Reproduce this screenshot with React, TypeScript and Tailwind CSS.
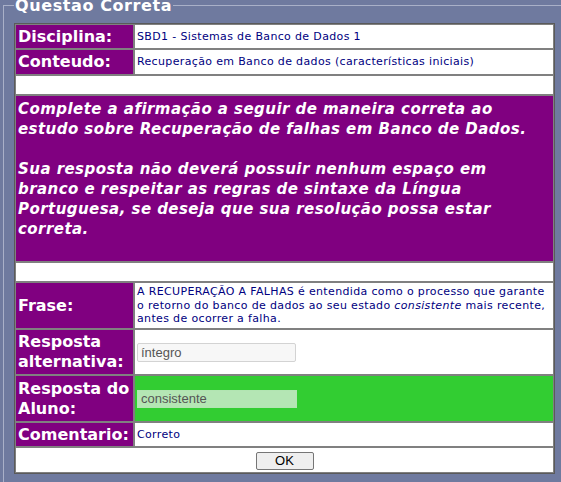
const label = 'bg-[#800080] text-white font-bold text-[16px] leading-[20px] px-[2px] align-middle border border-[#808080]';
const value = 'bg-white text-[#000080] text-[11px] leading-[13.5px] tracking-[0.35px] px-[2px] align-middle border border-[#808080]';

function LabelCell({ children, h }: { children: React.ReactNode; h: string }) {
  return <td className={`${label} ${h}`}>{children}</td>;
}

export default function App() {
  return (
    <div className="h-[482px] w-[561px] overflow-hidden bg-[#6f7a9f] font-['DejaVu_Sans',Verdana,sans-serif]">
      <fieldset className="ml-[3px] -mt-[4px] w-[600px] border border-[#a9b0c8] pb-[20px] pl-[10px] pt-[8px]">
        <legend className="ml-0 px-[1px] text-[16px] font-bold leading-[19px] tracking-[0.6px] text-white">Questao Correta</legend>
        <table className="w-[541px] border-separate border-spacing-0 border border-[#5a5a5a]">
          <colgroup>
            <col className="w-[119px]" />
            <col />
          </colgroup>
          <tbody>
            <tr>
              <LabelCell h="h-[25px]">Disciplina:</LabelCell>
              <td className={`${value} h-[25px]`}>SBD1 - Sistemas de Banco de Dados 1</td>
            </tr>
            <tr>
              <LabelCell h="h-[26px]">Conteudo:</LabelCell>
              <td className={`${value} h-[26px]`}>Recuperação em Banco de dados (características iniciais)</td>
            </tr>
            <tr>
              <td colSpan={2} className="h-[20px] border border-[#808080] bg-white"></td>
            </tr>
            <tr>
              <td
                colSpan={2}
                className="h-[167px] border border-[#808080] bg-[#800080] px-[2px] pt-[3px] align-top text-[15px] font-bold italic leading-[20px] tracking-[0.45px] text-white"
              >
                Complete a afirmação a seguir de maneira correta ao estudo sobre Recuperação de falhas em Banco de Dados.
                <br />
                <br />
                Sua resposta não deverá possuir nenhum espaço em branco e respeitar as regras de sintaxe da Língua
                Portuguesa, se deseja que sua resolução possa estar correta.
              </td>
            </tr>
            <tr>
              <td colSpan={2} className="h-[20px] border border-[#808080] bg-white"></td>
            </tr>
            <tr>
              <LabelCell h="h-[47px]">Frase:</LabelCell>
              <td className={`${value} h-[47px]`}>
                A RECUPERAÇÃO A FALHAS é entendida como o processo que garante o retorno do banco de dados ao seu
                estado <i>consistente</i> mais recente, antes de ocorrer a falha.
              </td>
            </tr>
            <tr>
              <LabelCell h="h-[46px]">
                Resposta
                <br />
                alternativa:
              </LabelCell>
              <td className={`${value} h-[46px]`}>
                <input
                  readOnly
                  value="íntegro"
                  className="block h-[19px] w-[159px] rounded-[2px] border border-[#d3d3d3] bg-[#f7f7f7] px-[3px] font-['Liberation_Sans',Arial,sans-serif] text-[13px] tracking-normal text-[#555] outline-none"
                />
              </td>
            </tr>
            <tr>
              <LabelCell h="h-[47px]">
                Resposta do
                <br />
                Aluno:
              </LabelCell>
              <td className="h-[47px] border border-[#808080] bg-[#32cd32] px-[2px] align-middle">
                <input
                  readOnly
                  value="consistente"
                  className="block h-[18px] w-[160px] border border-[#b2e5b2] bg-[#b4e6b4] px-[3px] font-['Liberation_Sans',Arial,sans-serif] text-[13px] text-[#555] outline-none"
                />
              </td>
            </tr>
            <tr>
              <LabelCell h="h-[25px]">Comentario:</LabelCell>
              <td className={`${value} h-[25px]`}>Correto</td>
            </tr>
            <tr>
              <td colSpan={2} className="h-[26px] border border-[#808080] bg-white text-center align-middle">
                <button
                  type="button"
                  className="inline-block h-[18px] w-[58px] rounded-[2px] border border-[#767676] bg-[#efefef] font-['Liberation_Sans',Arial,sans-serif] text-[13px] leading-[16px] text-black"
                >
                  OK
                </button>
              </td>
            </tr>
          </tbody>
        </table>
      </fieldset>
    </div>
  );
}
